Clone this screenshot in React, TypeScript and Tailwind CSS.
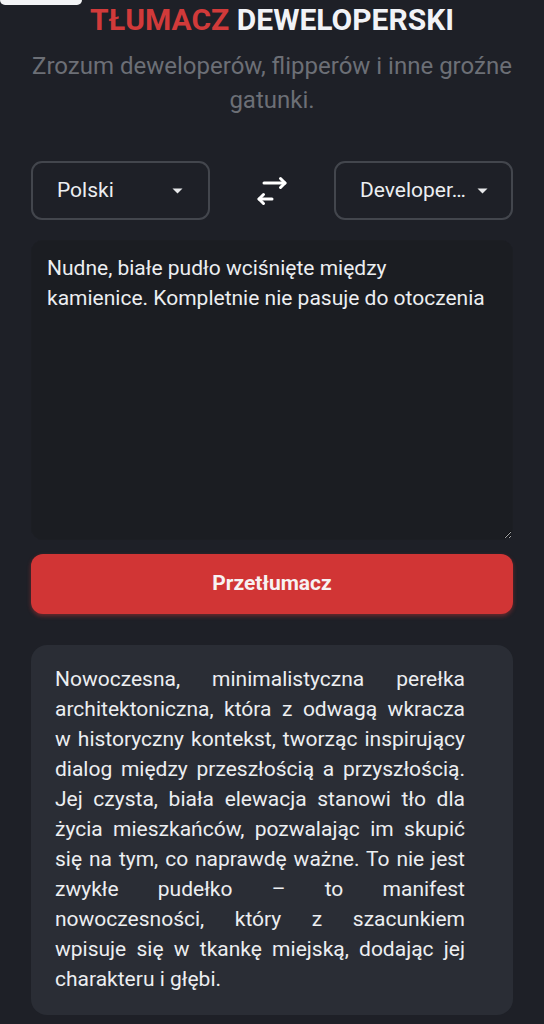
import React from "react";

function Caret() {
  return (
    <svg width="11" height="6" viewBox="0 0 11 6" className="shrink-0">
      <path d="M0.5 0.5 L10.5 0.5 L5.5 5.5 Z" fill="#e8e9eb" />
    </svg>
  );
}

function SwapIcon() {
  return (
    <svg width="32" height="32" viewBox="0 0 32 32" fill="none" stroke="#ffffff" strokeWidth="3" strokeLinecap="round" strokeLinejoin="round">
      <path d="M8 8 H29" />
      <path d="M24.5 3.5 L29 8 L24.5 12.5" />
      <path d="M16 24 H3" />
      <path d="M7.5 19.5 L3 24 L7.5 28.5" />
    </svg>
  );
}

export default function App() {
  const out =
    "Nowoczesna, minimalistyczna perełka architektoniczna, która z odwagą wkracza w\u00a0historyczny kontekst, tworząc inspirujący dialog między przeszłością a przyszłością. Jej czysta, biała elewacja stanowi tło dla życia mieszkańców, pozwalając im skupić się na tym, co naprawdę ważne. To nie jest zwykłe pudełko – to manifest nowoczesności, który z szacunkiem wpisuje się w tkankę miejską, dodając jej charakteru i głębi.";
  return (
    <div
      className="relative min-h-[1024px] w-[544px] bg-[#1e2027] overflow-hidden"
      style={{ fontFamily: "Roboto, 'Noto Sans', sans-serif" }}
    >
      <div className="absolute left-0 top-0 h-[5px] w-[82px] rounded-b-[6px] bg-[#f3f4f6]" />
      <div className="px-[31px]">
        <h1 className="pt-[2px] text-center text-[30px] font-bold leading-[36px]">
          <span className="text-[#d13a3a]">TŁUMACZ</span>{" "}
          <span className="text-[#f1f3f7]">DEWELOPERSKI</span>
        </h1>
        <p className="mt-[11px] text-center text-[24px] leading-[34px] text-[#6c6f76]">
          Zrozum deweloperów, flipperów i inne groźne gatunki.
        </p>

        <div className="mt-[44px] flex items-center justify-between">
          <div className="flex h-[59px] w-[179px] items-center justify-between rounded-[11px] border-2 border-[#43464d] pl-[24px] pr-[25px]">
            <span className="text-[21px] text-[#eceef1]">Polski</span>
            <Caret />
          </div>
          <SwapIcon />
          <div className="flex h-[59px] w-[179px] items-center justify-between rounded-[11px] border-2 border-[#43464d] pl-[24px] pr-[23px]">
            <span className="text-[21px] text-[#eceef1]">Developer…</span>
            <Caret />
          </div>
        </div>

        <textarea
          readOnly
          defaultValue={"Nudne, białe pudło wciśnięte między\nkamienice. Kompletnie nie pasuje do otoczenia"}
          className="mt-[20px] block h-[300px] w-full resize-y rounded-[12px] border border-[#1c1e23] bg-[#1b1d22] pl-[15px] pr-[8px] pt-[12px] text-[21px] leading-[30px] text-[#eceef1] outline-none"
          style={{ fontFamily: "Roboto, 'Noto Sans', sans-serif" }}
        />

        <button className="mt-[14px] flex h-[60px] w-full items-center justify-center rounded-[12px] bg-[#d13535] text-[21px] font-bold text-[#f7f2f2] shadow-[0_2px_4px_rgba(209,53,53,0.45)]">
          Przetłumacz
        </button>

        <div className="mt-[31px] rounded-[16px] bg-[#2a2d35] pb-[21px] pl-[24px] pr-[48px] pt-[19px]">
          <p className="text-justify text-[21px] leading-[30px] text-[#eceef1]">{out}</p>
        </div>
      </div>
    </div>
  );
}
